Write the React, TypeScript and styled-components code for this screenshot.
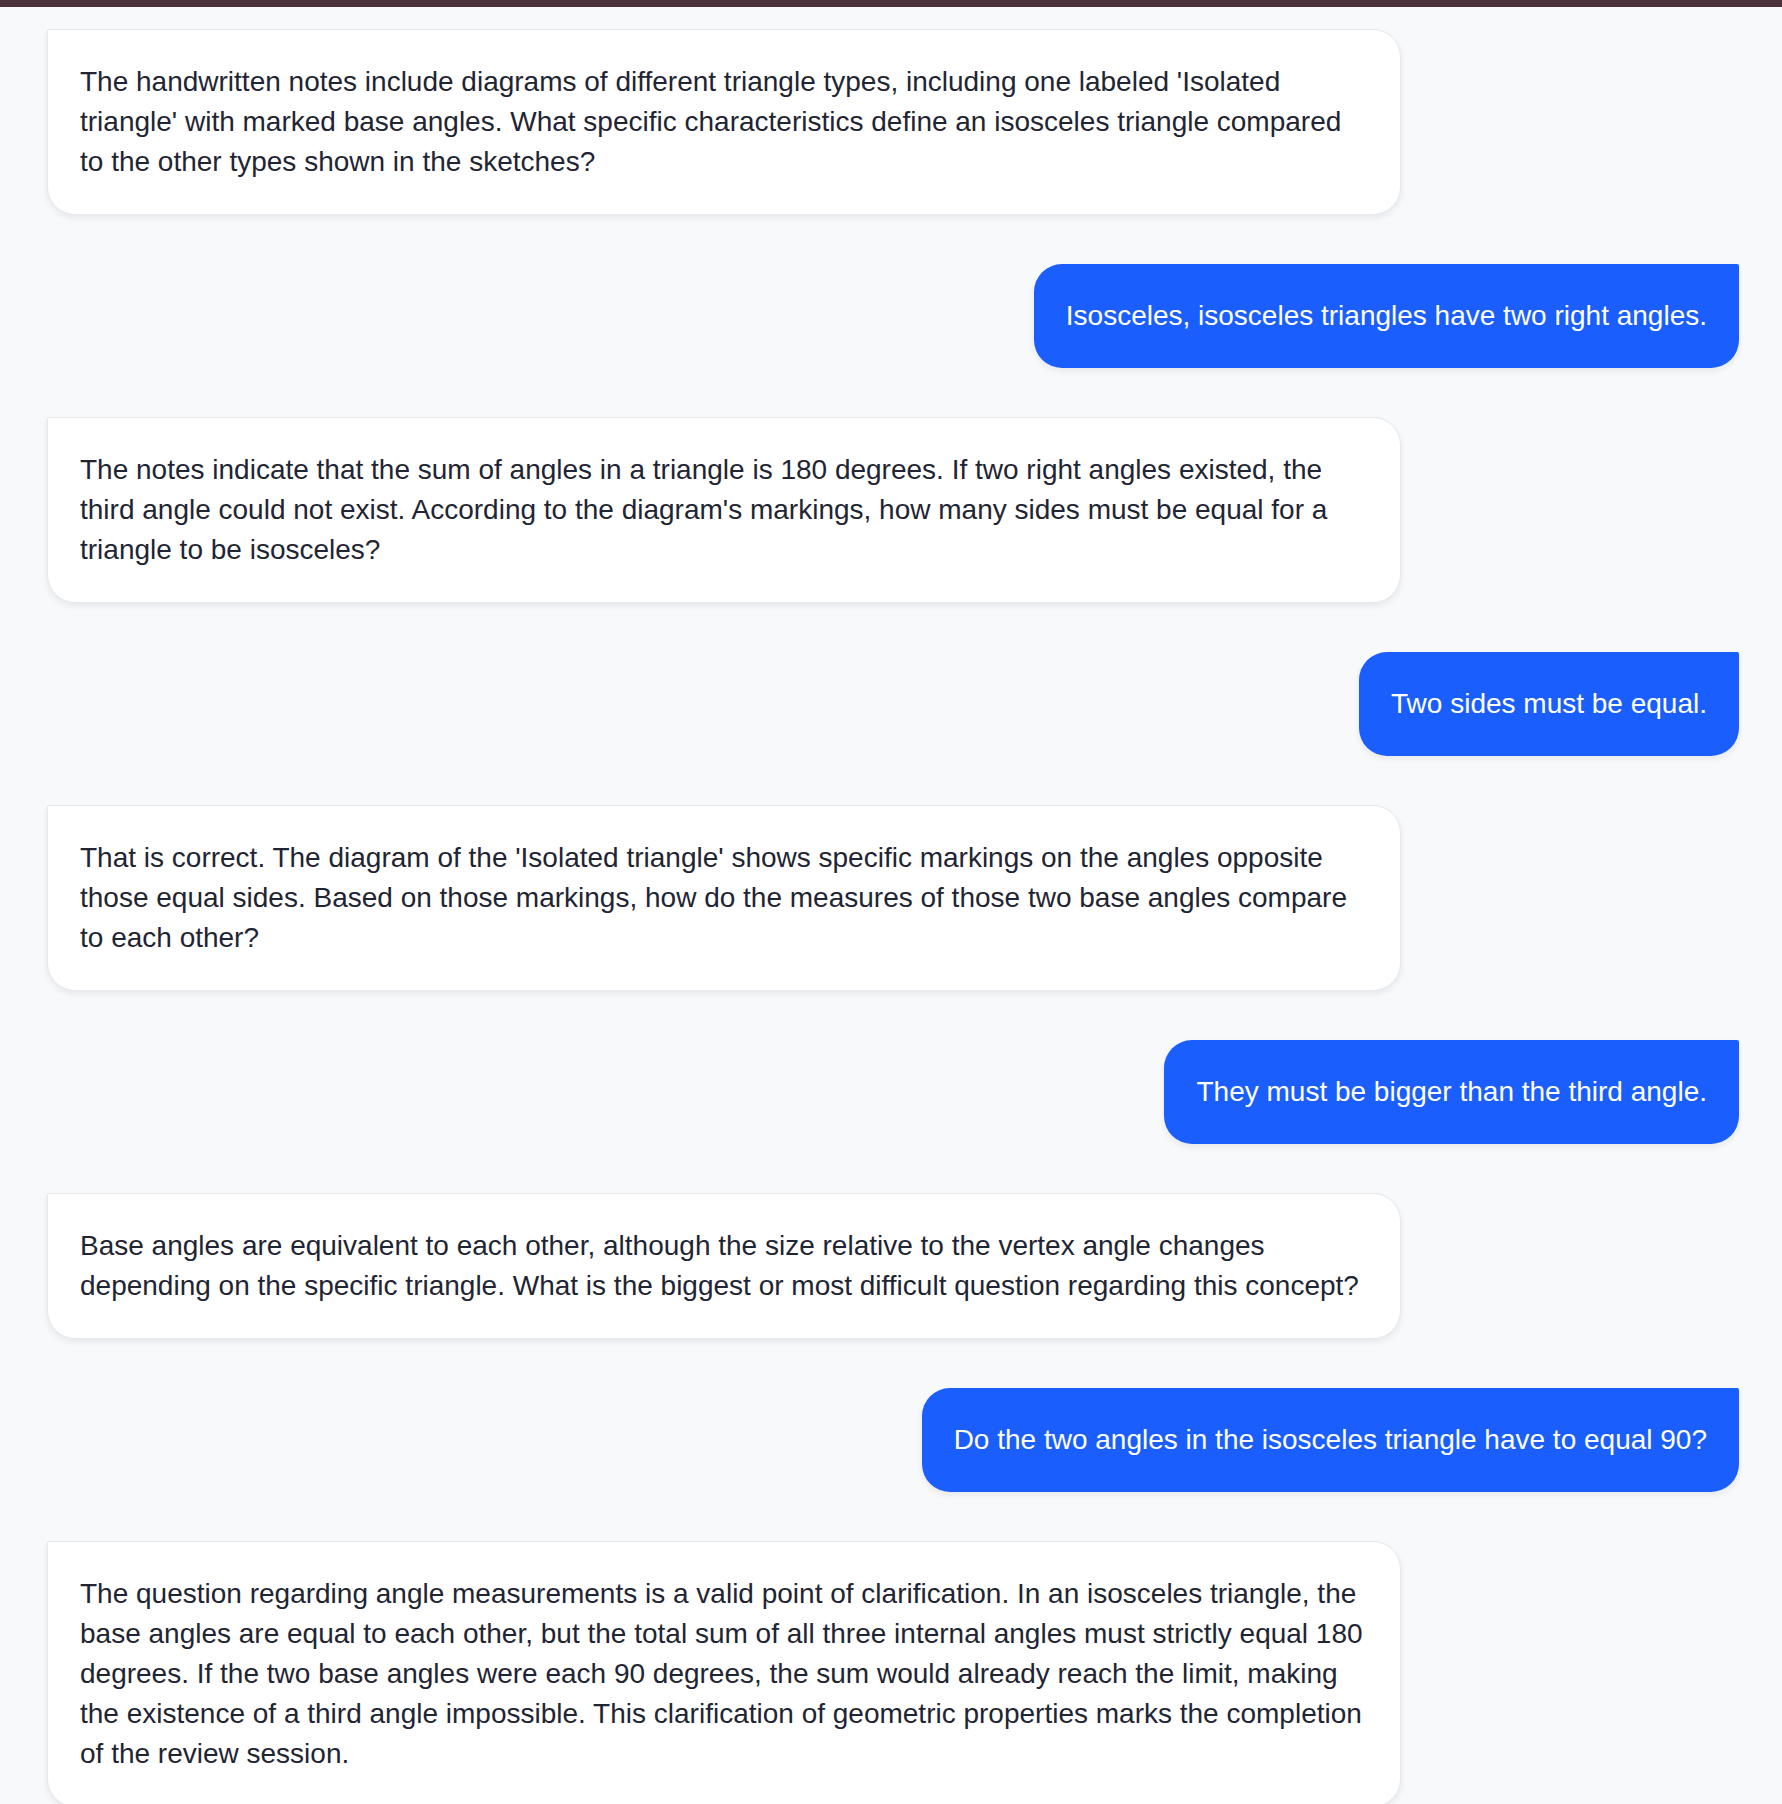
import React from "react";
import styled, { createGlobalStyle } from "styled-components";

const GlobalStyle = createGlobalStyle`
  html, body {
    margin: 0;
    padding: 0;
    background: #f8f9fb;
  }
  body {
    font-family: "Liberation Sans", Arial, Helvetica, sans-serif;
  }
  * { box-sizing: border-box; }
`;

const TopBar = styled.div`
  height: 7px;
  background: #4b3139;
`;

const Thread = styled.div`
  display: flex;
  flex-direction: column;
  gap: 49px;
  padding: 22px 43px 60px 47px;
  min-height: 1797px;
  background: #f8f9fb;
`;

const Row = styled.div<{ $fromUser: boolean }>`
  display: flex;
  justify-content: ${(p) => (p.$fromUser ? "flex-end" : "flex-start")};
`;

const Bubble = styled.div<{ $fromUser: boolean }>`
  max-width: 80%;
  width: ${(p) => (p.$fromUser ? "auto" : "80%")};
  padding: 32px;
  font-size: 28px;
  line-height: 40px;
  color: ${(p) => (p.$fromUser ? "#ffffff" : "#1f2533")};
  background: ${(p) => (p.$fromUser ? "#1a5efe" : "#ffffff")};
  border: ${(p) => (p.$fromUser ? "none" : "1px solid #e6e8eb")};
  border-radius: ${(p) => (p.$fromUser ? "28px 2px 28px 28px" : "2px 28px 28px 28px")};
  box-shadow: 0 3px 6px rgba(20, 30, 50, 0.08);
`;

type Msg = { user: boolean; text: string };

const messages: Msg[] = [
  {
    user: false,
    text: "The handwritten notes include diagrams of different triangle types, including one labeled 'Isolated triangle' with marked base angles. What specific characteristics define an isosceles triangle compared to the other types shown in the sketches?",
  },
  { user: true, text: "Isosceles, isosceles triangles have two right angles." },
  {
    user: false,
    text: "The notes indicate that the sum of angles in a triangle is 180 degrees. If two right angles existed, the third angle could not exist. According to the diagram's markings, how many sides must be equal for a triangle to be isosceles?",
  },
  { user: true, text: "Two sides must be equal." },
  {
    user: false,
    text: "That is correct. The diagram of the 'Isolated triangle' shows specific markings on the angles opposite those equal sides. Based on those markings, how do the measures of those two base angles compare to each other?",
  },
  { user: true, text: "They must be bigger than the third angle." },
  {
    user: false,
    text: "Base angles are equivalent to each other, although the size relative to the vertex angle changes depending on the specific triangle. What is the biggest or most difficult question regarding this concept?",
  },
  { user: true, text: "Do the two angles in the isosceles triangle have to equal 90?" },
  {
    user: false,
    text: "The question regarding angle measurements is a valid point of clarification. In an isosceles triangle, the base angles are equal to each other, but the total sum of all three internal angles must strictly equal 180 degrees. If the two base angles were each 90 degrees, the sum would already reach the limit, making the existence of a third angle impossible. This clarification of geometric properties marks the completion of the review session.",
  },
];

export default function App() {
  return (
    <>
      <GlobalStyle />
      <TopBar />
      <Thread>
        {messages.map((m, i) => (
          <Row key={i} $fromUser={m.user}>
            <Bubble $fromUser={m.user}>{m.text}</Bubble>
          </Row>
        ))}
      </Thread>
    </>
  );
}
